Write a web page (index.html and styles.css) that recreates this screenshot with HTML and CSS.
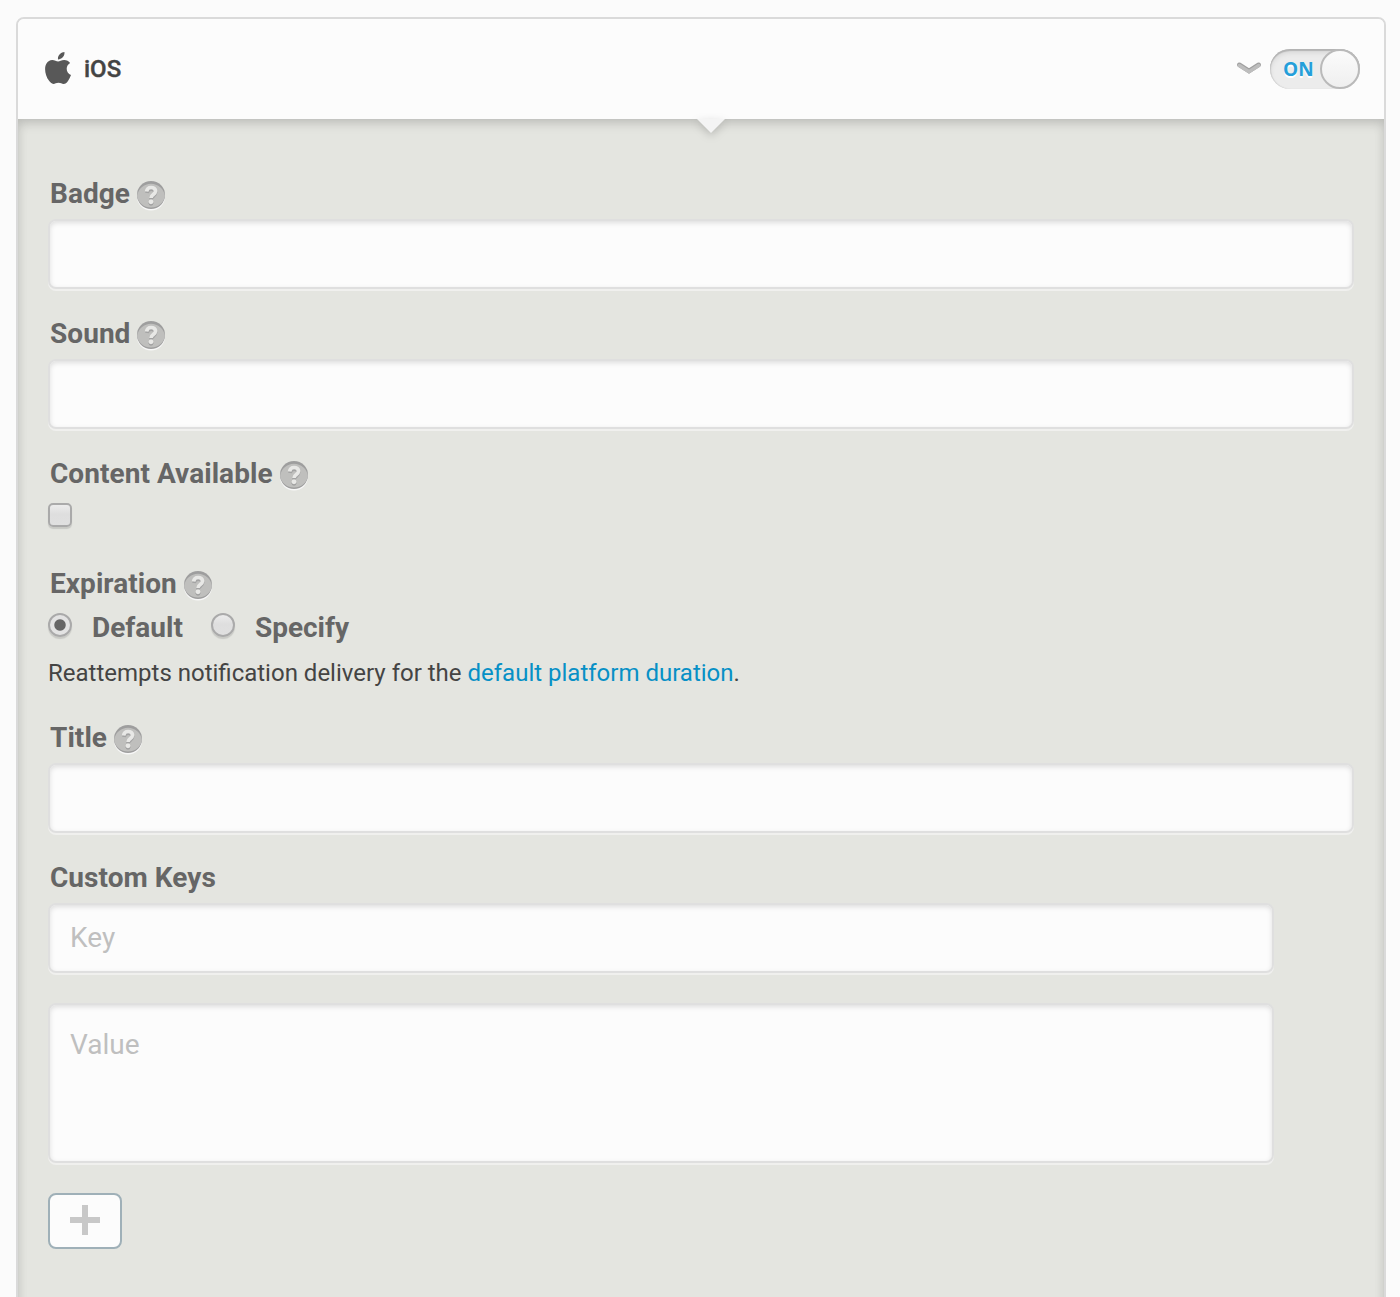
FILE: index.html
```html
<!DOCTYPE html>
<html lang="en">
<head>
<meta charset="utf-8">
<title>iOS notification options</title>
<link rel="stylesheet" href="styles.css">
</head>
<body>
<svg class="defs" aria-hidden="true">
  <defs>
    <symbol id="help" viewBox="0 0 32 32">
      <circle cx="16" cy="17.6" r="14" fill="#f8f8f8"/>
      <circle cx="16" cy="16" r="14" fill="#9e9e9e"/>
      <path d="M2.100 17a14 14 0 0 1 27.800 0 14 13 0 0 1-27.800 0z" fill="#bfbfbd"/>
      <path d="M12 14c.5-3 2.200-3.800 4.200-3.800 2.600 0 4.300 1.500 4.300 3.600 0 3.500-4.500 3-4.500 6.500" fill="none" stroke="#a3a3a3" stroke-width="3.800"/>
      <circle cx="16" cy="24.300" r="2.400" fill="#a0a0a0"/>
      <path d="M11.600 12.500c.4-2.800 2.300-4 4.500-4 2.600 0 4.400 1.500 4.400 3.600 0 3.500-4.500 3.300-4.500 7" fill="none" stroke="#e8e8e6" stroke-width="3.700"/>
      <circle cx="16" cy="22.800" r="2.400" fill="#e8e8e6"/>
    </symbol>
  </defs>
</svg>
<section class="panel">
  <header class="panel-head">
    <svg class="apple" width="26" height="32" viewBox="0 0 26 32"><path fill="#585858" d="M19.400 0c.7 4.300-2.800 7.500-6.400 7.400C12.400 3.400 16 .2 19.400 0zM13.100 9.400c1.500 0 3.400-1.500 6.100-1.500 2.400.1 4.600 1.100 5.900 3-5 3-4.300 10.100.9 12.100-.7 2-1.700 4-3 5.900-1.200 1.700-2.600 3-4.400 3-1.900 0-2.700-1.200-5.100-1.200s-3.300 1.200-5.100 1.200c-1.800 0-3.200-1.500-4.500-3.300C.4 23.800-1.300 16 1.500 11.600c1.300-2.300 3.500-3.600 5.700-3.600 2.500 0 4.100 1.400 5.900 1.400z"/></svg>
    <h1 class="title">iOS</h1>
    <svg class="chevron" width="26" height="14" viewBox="0 0 26 14"><path d="M3.300 2.800 13 9 22.700 2.800" fill="none" stroke="#9f9f9f" stroke-width="4.600" stroke-linecap="round"/><path d="M3.300 3.600 13 9.700 22.700 3.600" fill="none" stroke="#bdbdbd" stroke-width="3.600" stroke-linecap="round"/></svg>
    <div class="toggle"><span class="toggle-text">ON</span><span class="knob"></span></div>
  </header>
  <div class="panel-body">
    <svg class="notch" width="60" height="34" viewBox="0 0 60 34"><path d="M16 0h28L30 14z" fill="#f4f4f4"/></svg>
    <div class="field">
      <div class="label">Badge<svg class="help"><use href="#help"/></svg></div>
      <input class="input" type="text">
    </div>
    <div class="field">
      <div class="label">Sound<svg class="help"><use href="#help"/></svg></div>
      <input class="input" type="text">
    </div>
    <div class="field content-available">
      <div class="label">Content Available<svg class="help"><use href="#help"/></svg></div>
      <div class="control checkbox"></div>
    </div>
    <div class="field expiration">
      <div class="label">Expiration<svg class="help"><use href="#help"/></svg></div>
      <div class="radios">
        <span class="control radio selected"></span><span class="option">Default</span>
        <span class="control radio"></span><span class="option">Specify</span>
      </div>
      <p class="hint">Reattempts notification delivery for the <a class="link">default platform duration</a>.</p>
    </div>
    <div class="field">
      <div class="label">Title<svg class="help"><use href="#help"/></svg></div>
      <input class="input" type="text">
    </div>
    <div class="field keys">
      <div class="label">Custom Keys</div>
      <input class="input" type="text" placeholder="Key">
      <textarea class="input area" placeholder="Value"></textarea>
      <button class="add" aria-label="Add"><svg width="30" height="30" viewBox="0 0 30 30"><path d="M12 0h6v12h12v6H18v12h-6V18H0v-6h12z" fill="#c8c8c8"/></svg></button>
    </div>
  </div>
</section>
</body>
</html>
```
FILE: styles.css
```css
* { box-sizing: border-box; }
html { overflow: hidden; }
body {
  margin: 0;
  padding: 17px 14px 0 16px;
  height: 1297px;
  overflow: hidden;
  background: #fbfbfb;
  font-family: Roboto, sans-serif;
  color: #444;
}
.defs { position: absolute; width: 0; height: 0; }
.panel {
  height: 1320px;
  border: 2px solid #dadada;
  border-radius: 8px;
  overflow: hidden;
}
.panel-head {
  display: flex;
  align-items: center;
  height: 100px;
  padding: 0 24px 0 27px;
  background: #fcfcfc;
}
.apple { margin-top: -2px; }
.title { margin: 0 auto 0 13px; font-size: 24px; line-height: 28px; font-weight: 500; color: #444; -webkit-text-stroke: 0.4px #444; }
.chevron { margin: 0 8px 0 0; overflow: visible; }
.toggle {
  display: flex;
  align-items: center;
  justify-content: space-between;
  width: 90px;
  height: 40px;
  padding-left: 13px;
  border-radius: 20px;
  background: #ececec;
  box-shadow: inset 0 2px 1px #b4b4b4, inset 1px 0 1px #cfcfcf, inset 0 4px 5px #d8d8d8;
}
.toggle-text { font: 700 19px/24px "Open Sans", sans-serif; color: #259fda; text-shadow: 0 2px 0 #fff; letter-spacing: 0.1px; }
.knob { width: 40px; height: 40px; border: 2px solid #bababa; border-radius: 50%; background: linear-gradient(#fbfbfb, #efefef); }
.panel-body {
  position: relative;
  height: 1220px;
  padding: 50px 30px 0;
  background: #e4e5e0;
  box-shadow: inset 0 6px 12px -2px rgba(0, 0, 0, 0.14), inset 0 0 12px rgba(0, 0, 0, 0.08);
}
.notch { position: absolute; left: 663px; top: 0; filter: drop-shadow(0 3px 4px rgba(0, 0, 0, 0.18)); }
.field { margin-bottom: 20px; }
.label {
  display: flex;
  align-items: center;
  height: 50px;
  padding-left: 2px;
  font-size: 28px;
  line-height: 48px;
  font-weight: 700;
  letter-spacing: 0.05px;
  color: #666;
}
.help { width: 32px; height: 32px; margin: 1px 0 0 5px; }
.input {
  display: block;
  width: 100%;
  height: 70px;
  margin: 0;
  padding: 0 20px 2px;
  border: 2px solid #dfdfdf;
  border-radius: 8px;
  background: #fcfcfc;
  box-shadow: 0 2px 0 #f0f0ee, inset 0 2px 5px rgba(0, 0, 0, 0.12);
  font: 400 28px/36px Roboto, sans-serif;
  color: #444;
  outline: none;
}
.input::placeholder { color: #bfbfbf; opacity: 1; }
.keys .input { width: 1226px; }
.keys .area { height: 160px; margin-top: 30px; padding-top: 22px; resize: none; overflow: hidden; }
.control {
  width: 24px;
  height: 24px;
  border: 2px solid #aaa;
  background: linear-gradient(#ececec, #dedede 45%, #e0e0e0);
  box-shadow: 0 2px 1px rgba(0, 0, 0, 0.12);
}
.checkbox { margin-top: 4px; border-radius: 5px; }
.radio { flex: none; border-radius: 50%; }
.radio.selected { background: radial-gradient(circle, #666 5.2px, #e3e3e3 6.2px); }
.content-available { height: 110px; margin: 0; }
.expiration { height: 154px; margin: 0; }
.radios { display: flex; align-items: center; height: 32px; }
.option { margin: 5px 28px 0 20px; font-size: 28px; line-height: 32px; font-weight: 700; color: #666; }
.hint { margin: 17px 0 0; font-size: 24px; line-height: 30px; color: #444; }
.link { color: #0790c6; }
.add {
  display: flex;
  align-items: center;
  justify-content: center;
  width: 74px;
  height: 56px;
  margin-top: 30px;
  padding: 0 0 2px;
  border: 2px solid #9fb0b8;
  border-radius: 8px;
  background: #fcfcfc;
}
```
